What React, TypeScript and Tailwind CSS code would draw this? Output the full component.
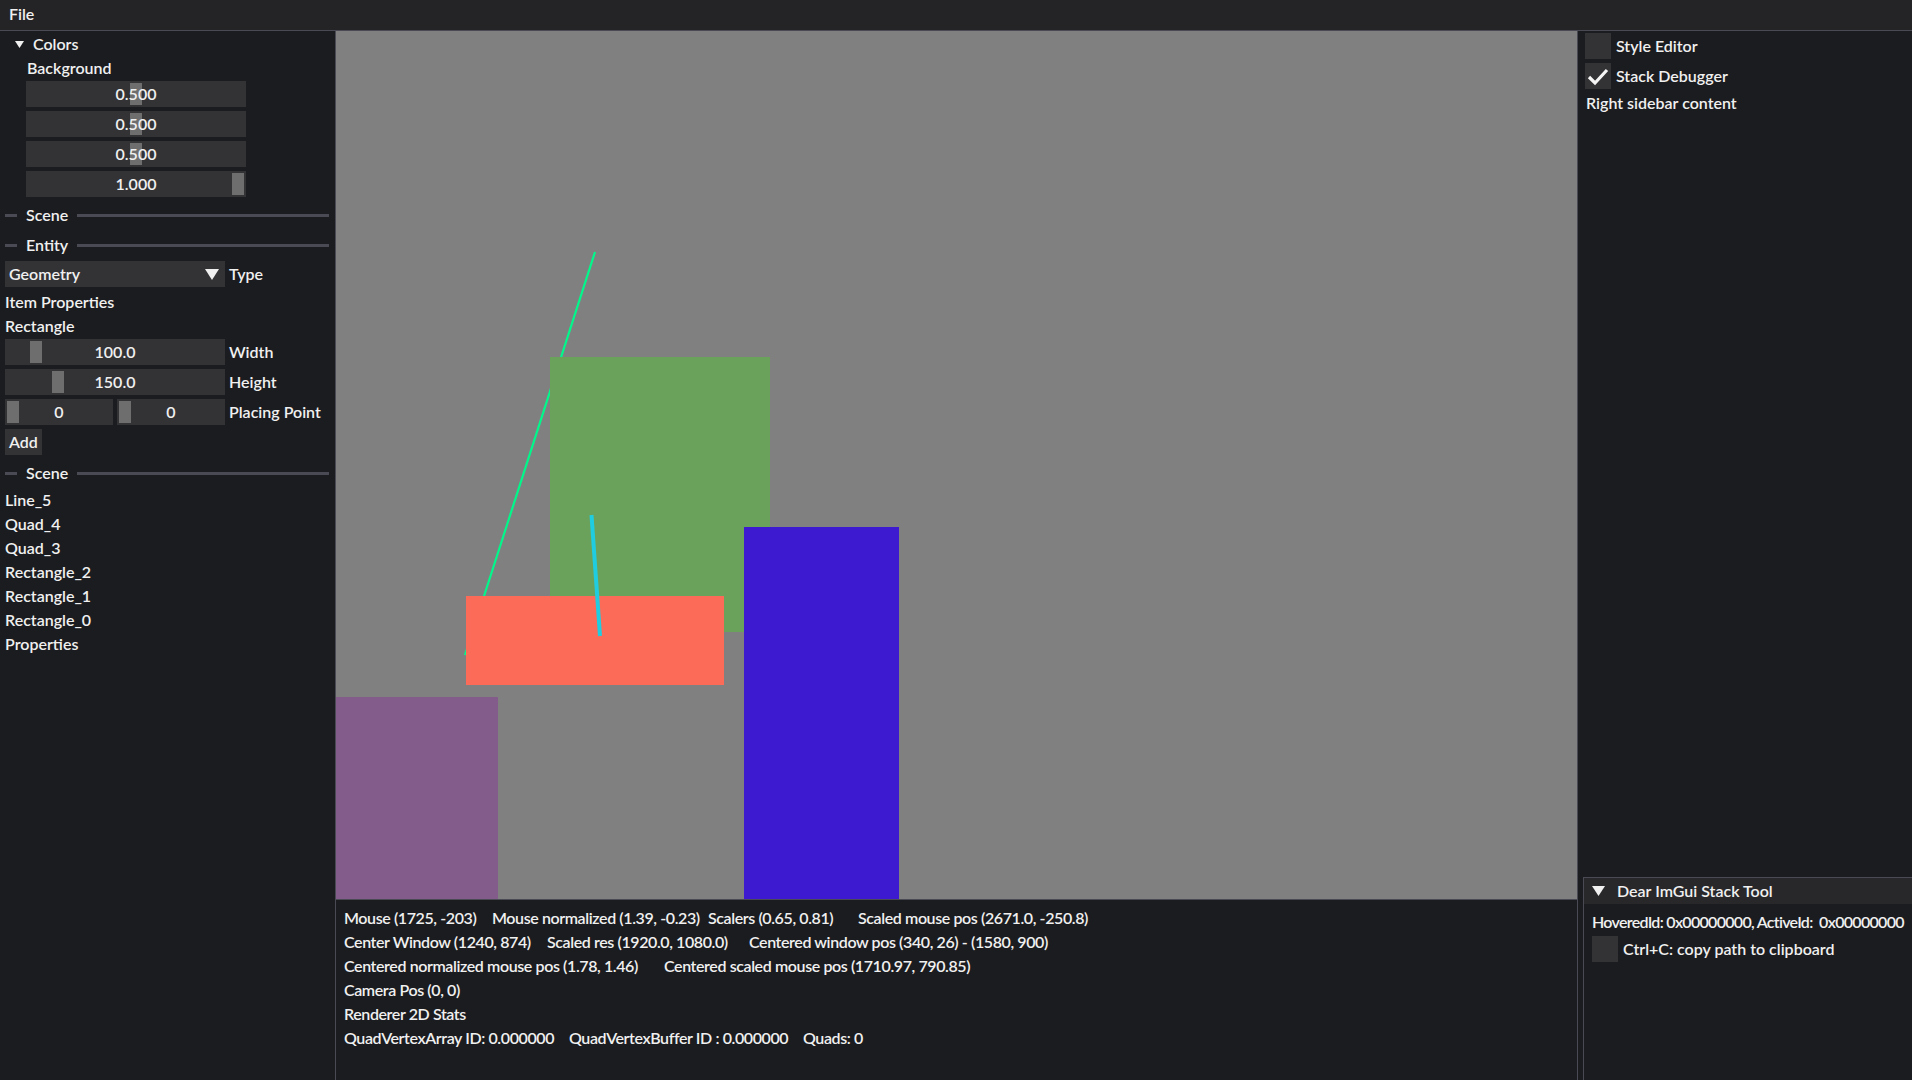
import React from "react";

const FONT = "font-['Lato','Noto_Sans',sans-serif]";

function Slider({ value, grab, width = "w-[220px]" }: { value: string; grab: number; width?: string }) {
  return (
    <div className={`relative h-[26px] ${width} shrink-0 bg-[#333336]`}>
      <div className="absolute top-[2px] h-[22px] w-[12px] bg-[#6e6e6e]" style={{ left: grab }} />
      <div className="relative flex h-full items-center justify-center">{value}</div>
    </div>
  );
}

function SeparatorText({ label }: { label: string }) {
  return (
    <div className="flex h-[20px] items-center">
      <div className="h-[3px] w-[12px] bg-[#4a4a55]" />
      <span className="ml-[9px] mr-[9px]">{label}</span>
      <div className="h-[3px] flex-1 bg-[#4a4a55]" />
    </div>
  );
}

function Triangle({ w, h, className = "" }: { w: number; h: number; className?: string }) {
  return (
    <svg width={w} height={h} viewBox={`0 0 ${w} ${h}`} className={className}>
      <polygon points={`0,0 ${w},0 ${w / 2},${h}`} fill="#f0f0f0" />
    </svg>
  );
}

function Checkbox({ checked }: { checked?: boolean }) {
  return (
    <div className="h-[26px] w-[26px] shrink-0 bg-[#333336]">
      {checked && (
        <svg width="26" height="26" viewBox="0 0 26 26">
          <polyline points="4,14 10,20 22,7" fill="none" stroke="#f5f5f5" strokeWidth="3.2" />
        </svg>
      )}
    </div>
  );
}

export default function App() {
  const sceneItems = ["Line_5", "Quad_4", "Quad_3", "Rectangle_2", "Rectangle_1", "Rectangle_0", "Properties"];

  return (
    <div className={`flex h-[1080px] w-[1912px] flex-col overflow-hidden bg-[#1b1c1f] text-[16px] font-semibold text-[#f0f0f0] ${FONT}`}>
      {/* menu bar */}
      <div className="flex h-[31px] shrink-0 items-center border-b border-[#4a4a55] bg-[#242426] pb-[2px] pl-[9px]">
        File
      </div>

      <div className="flex min-h-0 flex-1">
        {/* left sidebar */}
        <aside className="flex w-[336px] shrink-0 flex-col border-r border-[#4a4a55] pl-[5px] pr-[6px] leading-[20px]">
          <div className="flex h-[26px] items-center">
            <Triangle w={9} h={7} className="ml-[10px] mr-[9px]" />
            <span>Colors</span>
          </div>
          <div className="ml-[22px] mt-[1px] h-[20px]">Background</div>
          <div className="ml-[21px] mt-[3px] flex flex-col gap-[4px]">
            <Slider value="0.500" grab={104} />
            <Slider value="0.500" grab={104} />
            <Slider value="0.500" grab={104} />
            <Slider value="1.000" grab={206} />
          </div>
          <div className="mt-[8px]">
            <SeparatorText label="Scene" />
          </div>
          <div className="mt-[10px]">
            <SeparatorText label="Entity" />
          </div>
          <div className="mt-[6px] flex items-center">
            <div className="flex h-[26px] w-[220px] items-center justify-between bg-[#333336] pl-[4px] pr-[6px]">
              <span>Geometry</span>
              <Triangle w={14} h={11} />
            </div>
            <span className="ml-[4px]">Type</span>
          </div>
          <div className="mt-[5px] h-[20px]">Item Properties</div>
          <div className="mt-[4px] h-[20px]">Rectangle</div>
          <div className="mt-[3px] flex items-center">
            <Slider value="100.0" grab={25} />
            <span className="ml-[4px]">Width</span>
          </div>
          <div className="mt-[4px] flex items-center">
            <Slider value="150.0" grab={47} />
            <span className="ml-[4px]">Height</span>
          </div>
          <div className="mt-[4px] flex items-center gap-[4px]">
            <Slider value="0" grab={2} width="w-[108px]" />
            <Slider value="0" grab={2} width="w-[108px]" />
            <span>Placing Point</span>
          </div>
          <div className="mt-[4px] flex">
            <div className="flex h-[26px] items-center bg-[#333336] px-[4px]">Add</div>
          </div>
          <div className="mt-[8px]">
            <SeparatorText label="Scene" />
          </div>
          <div className="mt-[7px] flex flex-col gap-[4px]">
            {sceneItems.map((s) => (
              <div key={s} className="h-[20px]">
                {s}
              </div>
            ))}
          </div>
        </aside>

        {/* center */}
        <div className="flex w-[1241px] shrink-0 flex-col">
          <div className="h-[868px] shrink-0 bg-[#808080]">
            <svg width="1241" height="868" viewBox="0 0 1241 868">
              <line x1="259" y1="221" x2="129" y2="624" stroke="#00f78a" strokeWidth="2.2" />
              <rect x="214" y="326" width="220" height="275" fill="#6ba25b" />
              <rect x="130" y="565" width="258" height="89" fill="#fb6b58" />
              <rect x="408" y="496" width="155" height="372" fill="#3d19d0" />
              <rect x="0" y="666" width="162" height="202" fill="#845c8b" />
              <line x1="255.5" y1="484" x2="264" y2="605" stroke="#20cce0" strokeWidth="4" />
            </svg>
          </div>
          <div className="flex flex-1 flex-col gap-[4px] border-t border-[#4a4a55] pl-[8px] pt-[8px] leading-[20px] tracking-[-0.4px]">
            <div className="flex h-[20px]">
              <span className="w-[148px] shrink-0">Mouse (1725, -203)</span>
              <span className="w-[216px] shrink-0">Mouse normalized (1.39, -0.23)</span>
              <span className="w-[150px] shrink-0">Scalers (0.65, 0.81)</span>
              <span>Scaled mouse pos (2671.0, -250.8)</span>
            </div>
            <div className="flex h-[20px]">
              <span className="w-[203px] shrink-0">Center Window (1240, 874)</span>
              <span className="w-[202px] shrink-0">Scaled res (1920.0, 1080.0)</span>
              <span>Centered window pos (340, 26) - (1580, 900)</span>
            </div>
            <div className="flex h-[20px]">
              <span className="w-[320px] shrink-0">Centered normalized mouse pos (1.78, 1.46)</span>
              <span>Centered scaled mouse pos (1710.97, 790.85)</span>
            </div>
            <div className="h-[20px]">Camera Pos (0, 0)</div>
            <div className="h-[20px]">Renderer 2D Stats</div>
            <div className="flex h-[20px]">
              <span className="w-[225px] shrink-0">QuadVertexArray ID: 0.000000</span>
              <span className="w-[234px] shrink-0">QuadVertexBuffer ID : 0.000000</span>
              <span>Quads: 0</span>
            </div>
          </div>
        </div>

        {/* right sidebar */}
        <aside className="flex flex-1 flex-col border-l border-[#4a4a55] leading-[20px]">
          <div className="flex flex-col gap-[4px] pl-[7px] pt-[2px]">
            <div className="flex items-center gap-[5px]">
              <Checkbox />
              <span>Style Editor</span>
            </div>
            <div className="flex items-center gap-[5px]">
              <Checkbox checked />
              <span>Stack Debugger</span>
            </div>
            <div className="h-[20px] pl-[1px]">Right sidebar content</div>
          </div>
          <div className="flex-1" />
          <div className="ml-[5px] flex h-[203px] flex-col border-l border-t border-[#4a4a55]">
            <div className="flex h-[26px] shrink-0 items-center bg-[#28282b]">
              <Triangle w={13} h={10} className="ml-[8px] mr-[12px]" />
              <span>Dear ImGui Stack Tool</span>
            </div>
            <div className="flex flex-col gap-[4px] pl-[8px] pt-[8px]">
              <div className="h-[20px] whitespace-pre tracking-[-0.7px]">HoveredId: 0x00000000, ActiveId:  0x00000000</div>
              <div className="flex items-center gap-[5px]">
                <Checkbox />
                <span>Ctrl+C: copy path to clipboard</span>
              </div>
            </div>
          </div>
        </aside>
      </div>
    </div>
  );
}
